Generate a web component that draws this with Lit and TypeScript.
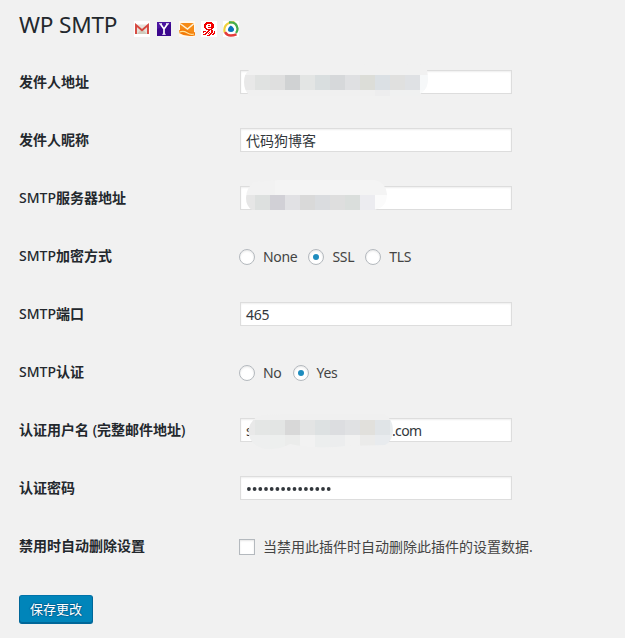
import { LitElement, html, svg, css, nothing } from "lit";
import { customElement, property } from "lit/decorators.js";

interface Mosaic {
  outline: string;
  cells: [number, number, number, number, string][];
}

/* Builds a run of neighbouring mosaic cells, all of the same height. */
const run = (x: number, y: number, h: number, first: number, colors: string[]) =>
  colors.map((c, i): [number, number, number, number, string] => [
    i === 0 ? x : x + first + (i - 1) * 15, y, i === 0 ? first : 15, h, c,
  ]);

const addressMosaic: Mosaic = {
  outline: "M9 0Q10 -4 16 -5H120L185 -6Q188 0 188 10Q188 17 183 22L180 24V26H10Q4 21 4 12Q4 4 9 0Z",
  cells: [
    [4, -7, 184, 12, "#f1f1f1"],
    ...run(4, 5, 15, 11, ["#e8e8e8", "#e0e2e1", "#dfdfdf", "#d0d2d3", "#e3e5e4", "#d9dedf", "#d6d8da", "#dfe0e2", "#dcddd8", "#dbe0e4", "#e0e0df", "#dfe1e4", "#f6f8f9"]),
    [4, 20, 131, 7, "#f0f0f0"], [135, 20, 15, 7, "#ededee"], [150, 20, 30, 7, "#f0f1f1"], [180, 20, 8, 7, "#f9fafa"],
  ],
};
const serverMosaic: Mosaic = {
  outline: "M14 -4L40 -6H135Q146 -3 147 8Q147 18 140 22L134 24H12Q6 20 6 12Q6 2 14 -4Z",
  cells: [
    [6, -6, 29, 15, "#f2f2f2"], [35, -6, 112, 15, "#f4f4f4"],
    ...run(6, 9, 15, 9, ["#e6e6e6", "#dde0df", "#d1d0d6", "#e1e1e4", "#d9d9d9", "#dadcdf", "#dedede", "#dadedc", "#ececf0", "#fbfbfb"]),
  ],
};
const userMosaic: Mosaic = {
  outline: "M18 -2Q26 -4 44 -4H145Q153 2 153 12Q153 23 145 27L105 28Q90 30 75 29Q62 29 50 26Q40 32 25 31Q8.5 27 8.5 13Q9 4 18 -2Z",
  cells: [
    [8, -5, 146, 7, "#f0f0f0"],
    ...run(8, 2, 15, 7, ["#e9e9e9", "#e4e6e5", "#e3e5e4", "#d8d8d8", "#e3e4e4", "#dde1e2", "#dcdde0", "#e0e1e3", "#e1e0dc", "#e0e4e7", "#e9edef"]),
    ...run(8, 17, 15, 7, ["#eeefef", "#eeefef", "#edefee", "#ebeceb", "#f2f2f2", "#eceeee", "#ecedee", "#f1f1f1", "#ebebea", "#e8ebee", "#eef0f0"]),
  ],
};

@customElement("text-field")
class TextField extends LitElement {
  @property() value = "";
  @property() tail = "";
  @property({ type: Boolean }) secret = false;
  @property({ attribute: false }) mosaic?: Mosaic;

  static styles = css`
    :host { display: block; width: 272px; position: relative; }
    .box {
      box-sizing: border-box; height: 24px; padding: 0 5px; display: flex; align-items: center;
      border: 1px solid #ddd; background: #fff; box-shadow: inset 0 1px 2px rgba(0, 0, 0, 0.07);
      color: #32373c; line-height: 22px; white-space: pre;
    }
    .text { padding-top: 1px; }
    .latin { letter-spacing: -0.3px; }
    .tail { margin-left: 139.5px; letter-spacing: -0.6px; }
    .dots { display: block; margin-top: 2px; }
    .mosaic { position: absolute; left: 0; top: 0; overflow: visible; pointer-events: none; }
  `;

  render() {
    const m = this.mosaic;
    return html`
      <div class="box">
        ${this.secret
          ? html`<svg class="dots" width="88" height="6" fill="#32373c">
              ${Array.from({ length: 15 }, (_, i) => svg`<circle cx=${2.9 + i * 5.7} cy="3" r="1.9" />`)}
            </svg>`
          : html`<span class="text ${/^\w+$/.test(this.value) ? "latin" : ""}">${this.value}</span>`}
        ${this.tail ? html`<span class="text tail">${this.tail}</span>` : nothing}
      </div>
      ${m
        ? html`<svg class="mosaic" width="200" height="24">
            <clipPath id="outline"><path d=${m.outline} /></clipPath>
            <g clip-path="url(#outline)" shape-rendering="crispEdges">
              ${m.cells.map(([x, y, w, h, c]) => svg`<rect x=${x} y=${y} width=${w} height=${h} fill=${c} />`)}
            </g>
          </svg>`
        : nothing}
    `;
  }
}

@customElement("choice-mark")
class ChoiceMark extends LitElement {
  @property() label = "";
  @property() kind = "radio";
  @property({ type: Boolean }) checked = false;

  static styles = css`
    :host { display: flex; align-items: center; }
    .mark {
      box-sizing: border-box; width: 16px; height: 16px; margin-right: 8px; flex: none;
      display: flex; align-items: center; justify-content: center;
      border: 1px solid #b4b9be; background: #fff; box-shadow: inset 0 1px 2px rgba(0, 0, 0, 0.1);
    }
    .radio { border-radius: 50%; }
    .dot { width: 6px; height: 6px; border-radius: 50%; background: #1e8cbe; }
    .label { line-height: 20px; white-space: nowrap; }
    .radio + .label { letter-spacing: -0.3px; }
  `;

  render() {
    return html`
      <span class="mark ${this.kind}">${this.checked ? html`<span class="dot"></span>` : nothing}</span>
      <span class="label">${this.label}</span>
    `;
  }
}

@customElement("app-root")
class AppRoot extends LitElement {
  static styles = css`
    :host {
      display: block; box-sizing: border-box; height: 638px; overflow: hidden; padding: 0 19px;
      background: #f1f1f1; color: #444;
      font: 14px/20px "Noto Sans", "Noto Sans CJK SC", sans-serif;
    }
    .head { display: flex; align-items: flex-start; height: 53px; }
    .title { margin: 0; width: 115px; padding-top: 10px; font-size: 22.6px; font-weight: 400; line-height: 30px; color: #23282d; white-space: nowrap; letter-spacing: -0.2px; }
    .logos { display: flex; gap: 6.3px; padding-top: 21px; }
    .logos svg { display: block; width: 16px; height: 16px; }
    .row { display: grid; grid-template-columns: 221px 1fr; align-items: center; height: 58px; }
    .name { font-weight: 600; color: #23282d; }
    .latin { font-weight: 500; }
    .choices { display: flex; gap: 11px; margin: 2px 0 0 -1px; }
    .save {
      display: block; box-sizing: border-box; width: 74px; height: 29px; margin-top: 20px; padding: 0 0 1px;
      border: 1px solid; border-color: #0073aa #006799 #006799; border-radius: 3px;
      background: #0085ba; box-shadow: inset 0 -1px 0 #006799; color: #fff;
      font: 13px/26px "Noto Sans", "Noto Sans CJK SC", sans-serif; text-align: center;
      text-shadow: 0 -1px 1px #006799, 1px 0 1px #006799, 0 1px 1px #006799, -1px 0 1px #006799;
    }
  `;

  logos() {
    return html`
      <svg viewBox="0 0 16 16">
        <rect width="16" height="16" fill="#fff" />
        <path d="M2 3.5H14V13H2Z" fill="#e5e2dc" />
        <path d="M3 13L7 8.5H9L13 13Z" fill="#cfcbbd" />
        <path d="M2 13V4L8 9.3L14 4V13" fill="none" stroke="#d6453d" stroke-width="1.9" />
      </svg>
      <svg viewBox="0 0 16 16">
        <rect x="1" y="1" width="14" height="14" fill="#3b078d" />
        <path d="M1 1H15V3L1 8Z" fill="#5720ad" opacity=".6" />
        <path d="M4.5 3L8 8V13M11.5 3L8 8" fill="none" stroke="#fff" stroke-width="1.7" />
        <path d="M3 2.8H6M10 2.8H13M6.3 13.3H9.7" stroke="#fff" stroke-width="1" />
      </svg>
      <svg viewBox="0 0 16 16">
        <rect width="16" height="16" fill="#fff8ec" />
        <path d="M1 2H15V12H1Z" fill="#f68b16" />
        <path d="M1 2.5L8.5 8L15 2.5" fill="none" stroke="#fff2d6" stroke-width="1.5" />
        <path d="M0 9.5Q5 7 9 10T16 11V14.5Q7 16.5 0 12Z" fill="#f47b08" />
        <path d="M0 11.3Q4 9.4 8 11.8T15 13" fill="none" stroke="#ffe49b" stroke-width="1.2" />
      </svg>
      <svg viewBox="0 0 16 16" shape-rendering="crispEdges">
        <rect width="16" height="16" fill="#fff" />
        <path d="M5 1H11V2H12V3H13V7H12V8H11V9H5V8H4V7H3V3H4V2H5Z" fill="#f20000" />
        <path d="M6 3H10V6H7V7H10V8H6V7H5V4H6ZM7 4V5H9V4Z" fill="#fff" fill-rule="evenodd" />
        <path d="M7 9H9V10H8V11H7V12H6V13H5V14H2V13H4V12H5V11H6V10H7ZM2 10H5V11H3V12H2ZM10 9H12V12H11V13H10V14H9V15H6V14H8V13H9V12H10ZM13 10H14V13H13V14H11V13H12V12H13ZM8 11H9V12H8V13H7V12H8Z" fill="#f20000" />
      </svg>
      <svg viewBox="0 0 16 16">
        <rect width="16" height="16" fill="#fff" />
        <path d="M1.7 11.5Q0 4.5 6.5 1.7L11.5 1" fill="none" stroke="#f1d13b" stroke-width="2.2" />
        <path d="M6 1.5Q13.5 .5 14.5 7.5Q14.7 10 13 12" fill="none" stroke="#46ad4c" stroke-width="2.3" />
        <path d="M2 11.2Q5 16.5 13.5 13.3" fill="none" stroke="#e43c3c" stroke-width="2.4" />
        <path d="M7.8 4.4Q9.8 5 11 7.7Q11.6 10.8 8 11Q4.4 11 5 8Q5.7 5.5 7.8 4.4Z" fill="#0874bb" />
      </svg>
    `;
  }

  row(name: unknown, control: unknown) {
    return html`<div class="row"><div class="name">${name}</div>${control}</div>`;
  }

  render() {
    const smtp = html`<span class="latin">SMTP</span>`;
    return html`
      <div class="head">
        <h1 class="title">WP SMTP</h1>
        <div class="logos">${this.logos()}</div>
      </div>
      ${this.row("发件人地址", html`<text-field .mosaic=${addressMosaic}></text-field>`)}
      ${this.row("发件人昵称", html`<text-field value="代码狗博客"></text-field>`)}
      ${this.row(html`${smtp}服务器地址`, html`<text-field .mosaic=${serverMosaic}></text-field>`)}
      ${this.row(html`${smtp}加密方式`, html`<div class="choices">
        <choice-mark label="None"></choice-mark>
        <choice-mark label="SSL" checked></choice-mark>
        <choice-mark label="TLS"></choice-mark>
      </div>`)}
      ${this.row(html`${smtp}端口`, html`<text-field value="465"></text-field>`)}
      ${this.row(html`${smtp}认证`, html`<div class="choices">
        <choice-mark label="No"></choice-mark>
        <choice-mark label="Yes" checked></choice-mark>
      </div>`)}
      ${this.row(html`认证用户名 <span class="latin">(</span>完整邮件地址<span class="latin">)</span>`,
        html`<text-field value="s" tail=".com" .mosaic=${userMosaic}></text-field>`)}
      ${this.row("认证密码", html`<text-field secret></text-field>`)}
      ${this.row("禁用时自动删除设置", html`<div class="choices">
        <choice-mark kind="check" label="当禁用此插件时自动删除此插件的设置数据."></choice-mark>
      </div>`)}
      <button class="save">保存更改</button>
    `;
  }
}
